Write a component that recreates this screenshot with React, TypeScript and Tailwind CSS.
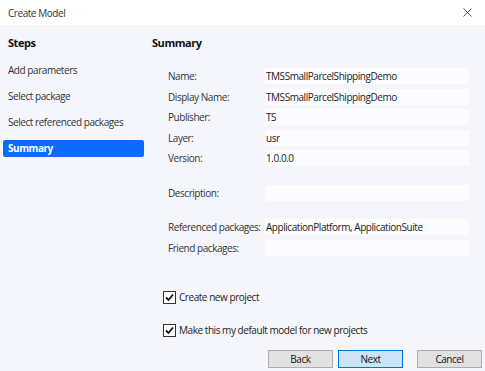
import React from "react";

const fields: [string, string][] = [
  ["Name:", "TMSSmallParcelShippingDemo"],
  ["Display Name:", "TMSSmallParcelShippingDemo"],
  ["Publisher:", "TS"],
  ["Layer:", "usr"],
  ["Version:", "1.0.0.0"],
];

function Row({ label, value }: { label: string; value: string }) {
  return (
    <div className="flex items-center h-[20.5px]">
      <div className="w-[97px] shrink-0 text-[#333]">{label}</div>
      <div className="w-[204px] h-[16px] bg-[#fcfcff] flex items-center pl-[1px] text-[#222]">{value}</div>
    </div>
  );
}

function Check({ label }: { label: string }) {
  return (
    <div className="flex items-center gap-[3px] h-[14px]">
      <div className="w-[13px] h-[13px] border border-[#333] bg-white flex items-center justify-center">
        <svg width="11" height="11" viewBox="0 0 11 11">
          <path d="M2 5.5 L4.5 8 L9 2.5" stroke="#111" strokeWidth="1.8" fill="none" />
        </svg>
      </div>
      <span className="text-[#222]">{label}</span>
    </div>
  );
}

export default function App() {
  return (
    <div
      className="w-[485px] h-[371px] bg-[#f5f6fb] flex flex-col text-[10px] tracking-[-0.45px] leading-[14px] whitespace-nowrap overflow-hidden"
      style={{ fontFamily: '"Open Sans", "Noto Sans", sans-serif' }}
    >
      {/* title bar */}
      <div className="h-[25px] bg-white flex items-center justify-between pl-[8px] pr-[13px] shrink-0">
        <span className="text-[#333]">Create Model</span>
        <svg width="9" height="9" viewBox="0 0 9 9">
          <path d="M0.5 0.5 L8.5 8.5 M8.5 0.5 L0.5 8.5" stroke="#555" strokeWidth="1" />
        </svg>
      </div>

      <div className="flex flex-1">
        {/* steps */}
        <div className="w-[148px] shrink-0 pl-[3px] pt-[10px]">
          <div className="h-[16px] pl-[5px] font-bold text-[11px] text-[#111] flex items-center">Steps</div>
          <div className="flex flex-col gap-[9px] mt-[10.5px] w-[141px]">
            <div className="h-[17px] pl-[5px] flex items-center text-[#333]">Add parameters</div>
            <div className="h-[17px] pl-[5px] flex items-center text-[#333]">Select package</div>
            <div className="h-[17px] pl-[5px] flex items-center text-[#333]">Select referenced packages</div>
            <div className="h-[17px] pl-[5px] flex items-center text-white font-bold bg-[#0a6cff] rounded-[2px]">Summary</div>
          </div>
        </div>

        {/* summary */}
        <div className="flex-1 pl-[4px] pt-[10px] flex flex-col">
          <div className="h-[16px] font-bold text-[11px] text-[#111] flex items-center">Summary</div>
          <div className="pl-[16px] mt-[15px] flex flex-col">
            {fields.map(([l, v]) => (
              <Row key={l} label={l} value={v} />
            ))}
            <div className="mt-[14.5px]">
              <Row label="Description:" value="" />
            </div>
            <div className="mt-[13.5px]">
              <Row label="Referenced packages:" value="ApplicationPlatform, ApplicationSuite" />
              <Row label="Friend packages:" value="" />
            </div>
          </div>
          <div className="pl-[11px] mt-[32px] flex flex-col gap-[19px]">
            <Check label="Create new project" />
            <Check label="Make this my default model for new projects" />
          </div>
          <div className="flex mt-[13px] pl-[116px] gap-[5px]">
            <button className="w-[65px] h-[18px] bg-[#e1e1e1] border border-[#adadad] text-[#111]">Back</button>
            <button className="w-[65px] h-[18px] bg-[#cce4f7] border border-[#0078d7] text-[#111]">Next</button>
            <button className="w-[65px] h-[18px] bg-[#e1e1e1] border border-[#adadad] text-[#111] ml-[9px]">Cancel</button>
          </div>
        </div>
      </div>
    </div>
  );
}
